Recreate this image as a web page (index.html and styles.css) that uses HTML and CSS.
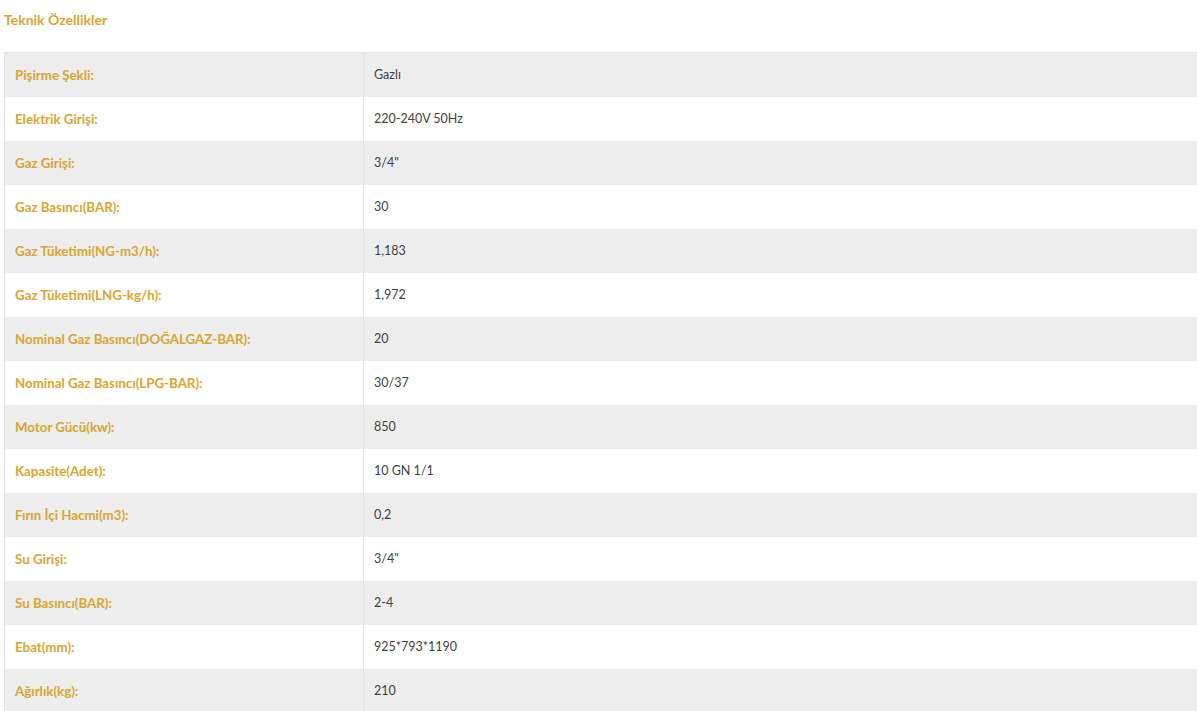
FILE: index.html
```html
<!DOCTYPE html>
<html lang="tr">
<head>
<meta charset="utf-8">
<title>Teknik Özellikler</title>
<link rel="stylesheet" href="styles.css">
</head>
<body>
<div class="specs">
  <h3 class="specs-title">Teknik Özellikler</h3>
  <table class="specs-table">
    <tbody>
      <tr><th>Pişirme Şekli:</th><td>Gazlı</td></tr>
      <tr><th>Elektrik Girişi:</th><td>220-240V 50Hz</td></tr>
      <tr><th>Gaz Girişi:</th><td>3/4"</td></tr>
      <tr><th>Gaz Basıncı(BAR):</th><td>30</td></tr>
      <tr><th>Gaz Tüketimi(NG-m3/h):</th><td>1,183</td></tr>
      <tr><th>Gaz Tüketimi(LNG-kg/h):</th><td>1,972</td></tr>
      <tr><th>Nominal Gaz Basıncı(DOĞALGAZ-BAR):</th><td>20</td></tr>
      <tr><th>Nominal Gaz Basıncı(LPG-BAR):</th><td>30/37</td></tr>
      <tr><th>Motor Gücü(kw):</th><td>850</td></tr>
      <tr><th>Kapasite(Adet):</th><td>10 GN 1/1</td></tr>
      <tr><th>Fırın İçi Hacmi(m3):</th><td>0,2</td></tr>
      <tr><th>Su Girişi:</th><td>3/4"</td></tr>
      <tr><th>Su Basıncı(BAR):</th><td>2-4</td></tr>
      <tr><th>Ebat(mm):</th><td>925*793*1190</td></tr>
      <tr><th>Ağırlık(kg):</th><td>210</td></tr>
    </tbody>
  </table>
</div>
</body>
</html>
```

FILE: styles.css
```css
html, body {
  margin: 0;
  padding: 0;
  background: #ffffff;
  overflow: hidden;
}

body {
  font-family: "Lato", "Open Sans", sans-serif;
  font-size: 13px;
  color: #444444;
}

.specs {
  padding: 0 0 0 4px;
}

.specs-title {
  margin: 0;
  padding: 11px 0 0 0;
  height: 52px;
  box-sizing: border-box;
  font-size: 14px;
  line-height: 18px;
  font-weight: 700;
  color: #dba52e;
}

.specs-table {
  width: 1210px;
  border-collapse: collapse;
  border-top: 1px solid #e3e3e3;
  border-left: 1px solid #e3e3e3;
}

.specs-table th,
.specs-table td {
  height: 44px;
  box-sizing: border-box;
  padding: 0 10px;
  text-align: left;
  vertical-align: middle;
}

.specs-table th {
  width: 359px;
  font-size: 13.3px;
  font-weight: 700;
  color: #dba52e;
  border-right: 1px solid #e3e3e3;
}

.specs-table td {
  font-size: 12.5px;
  font-weight: 400;
  color: #3f3f3f;
}

.specs-table tr:nth-child(odd) {
  background: #ededed;
}
```
